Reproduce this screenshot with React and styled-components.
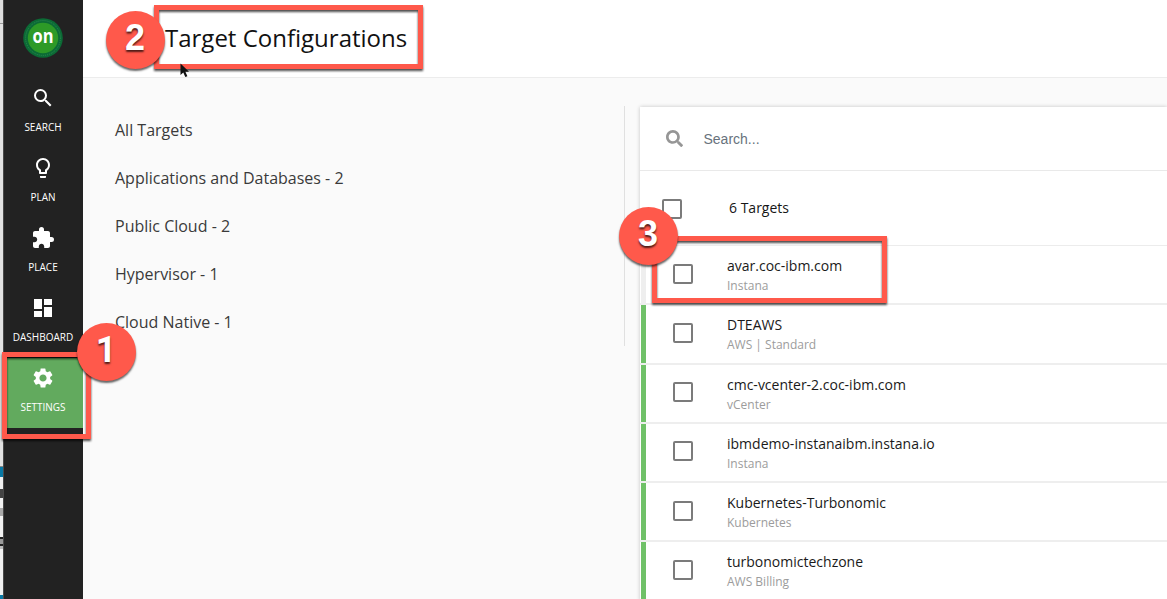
import React from "react";
import styled, { createGlobalStyle } from "styled-components";
import { MdSearch, MdLightbulbOutline, MdExtension, MdDashboard, MdSettings } from "react-icons/md";
import { FaSearch } from "react-icons/fa";

const GlobalStyle = createGlobalStyle`
  * { box-sizing: border-box; }
  body { margin: 0; overflow: hidden; background: #fafafa; font-family: "Open Sans", sans-serif; }
`;

const Page = styled.div`
  position: relative;
  display: flex;
  width: 1167px;
  height: 599px;
  overflow: hidden;
  background: #fafafa;
`;

const Edge = styled.div`
  display: flex;
  flex-direction: column;
  flex: none;
  width: 3px;
  overflow: hidden;
`;
const EdgeBand = styled.div`
  flex: none;
  height: ${(p) => p.$h}px;
  background: ${(p) => p.$c};
`;

const Sidebar = styled.nav`
  flex: none;
  display: flex;
  flex-direction: column;
  align-items: stretch;
  width: 80px;
  background: #222;
  box-shadow: inset 1px 0 0 #4a4a4a;
  color: #fff;
`;
const LogoBox = styled.div`
  display: flex;
  justify-content: center;
  padding-top: 18px;
  height: 78px;
`;
const NavItem = styled.div`
  display: flex;
  flex-direction: column;
  align-items: center;
  height: 70px;
  padding-top: 8px;
  background: ${(p) => (p.$active ? "#62aa5e" : "transparent")};
  svg { width: 24px; height: 24px; display: block; }
`;
const NavLabel = styled.span`
  margin-top: 10px;
  font-size: 10px;
  line-height: 14px;
  white-space: nowrap;
`;

const Main = styled.main`
  flex: 1;
  min-width: 0;
  display: flex;
  flex-direction: column;
`;
const Header = styled.header`
  flex: none;
  height: 78px;
  padding: 21px 0 0 82px;
  background: #fff;
  border-bottom: 1px solid #ececec;
`;
const Title = styled.h1`
  margin: 0;
  font-size: 24px;
  font-weight: 400;
  line-height: 33px;
  color: #111;
  white-space: nowrap;
`;
const Body = styled.div`
  flex: 1;
  display: flex;
`;
const Categories = styled.ul`
  list-style: none;
  flex: none;
  width: 542px;
  height: 240px;
  margin: 28px 0 0;
  padding: 0 0 0 32px;
  border-right: 1px solid #e0e0e0;
`;
const Category = styled.li`
  height: 48px;
  line-height: 48px;
  font-size: 16px;
  color: #3a3a3a;
  white-space: nowrap;
`;
const Panel = styled.section`
  flex: 1;
  margin: 29px 0 0 15px;
  background: #fff;
  box-shadow: 0 0 4px rgba(0, 0, 0, 0.22);
`;
const SearchBar = styled.div`
  display: flex;
  align-items: center;
  height: 64px;
  padding-left: 26px;
  border-bottom: 1px solid #e9e9e9;
  color: #969696;
`;
const SearchHint = styled.span`
  margin-left: 20.5px;
  font-family: "Liberation Sans", sans-serif;
  font-size: 14px;
  color: #68727c;
`;
const ListHeader = styled.div`
  display: flex;
  align-items: flex-start;
  height: 75px;
  padding: 28px 0 0 22px;
  border-bottom: 1px solid #ececec;
`;
const Count = styled.span`
  margin: -1px 0 0 47px;
  font-size: 14px;
  line-height: 19px;
  color: #161616;
`;
const Checkbox = styled.span`
  flex: none;
  width: 20px;
  height: 20px;
  border: 2px solid #7b7b7b;
  border-radius: 2px;
  background: #fff;
`;
const Row = styled.div`
  display: flex;
  align-items: flex-start;
  height: ${(p) => p.$h}px;
  margin-left: 1px;
  padding: ${(p) => p.$boxTop}px 0 0 27px;
  border-left: 5px solid ${(p) => (p.$ok ? "#70c168" : "#eeeeee")};
`;
const Divider = styled.div`
  height: 2px;
  background: #eee;
`;
const RowText = styled.div`
  display: flex;
  flex-direction: column;
  margin: ${(p) => p.$shift}px 0 0 34px;
  white-space: nowrap;
`;
const Name = styled.span`
  font-size: 14px;
  line-height: 20px;
  color: #1a1a1a;
`;
const Kind = styled.span`
  font-size: 12px;
  line-height: 19px;
  color: #9c9c9c;
`;

const Frame = styled.div`
  position: absolute;
  left: ${(p) => p.$x}px;
  top: ${(p) => p.$y}px;
  width: ${(p) => p.$w}px;
  height: ${(p) => p.$h}px;
  border: 5px solid #ff594b;
  filter: drop-shadow(0 2px 1px rgba(0, 0, 0, 0.7));
`;
const Badge = styled.div`
  position: absolute;
  left: ${(p) => p.$x}px;
  top: ${(p) => p.$y}px;
  display: flex;
  align-items: center;
  justify-content: center;
  width: 59px;
  height: 58px;
  padding: 0 1px 5px 0;
  border-radius: 50%;
  background: #ff594b;
  color: #fff;
  font-family: ${(p) => (p.$plain ? "Roboto" : '"Liberation Sans"')}, sans-serif;
  font-weight: 700;
  font-size: 36px;
  line-height: 42px;
  text-shadow: 0 2px 2px rgba(0, 0, 0, 0.7);
  box-shadow: 0 2px 2px rgba(0, 0, 0, 0.6);
`;
const Pointer = styled.svg`
  position: absolute;
  left: 179px;
  top: 62px;
`;

const nav = [
  ["SEARCH", MdSearch],
  ["PLAN", MdLightbulbOutline],
  ["PLACE", MdExtension],
  ["DASHBOARD", MdDashboard],
  ["SETTINGS", MdSettings, true],
];
const categories = ["All Targets", "Applications and Databases - 2", "Public Cloud - 2", "Hypervisor - 1", "Cloud Native - 1"];
const targets = [
  { name: "avar.coc-ibm.com", kind: "Instana", ok: false, h: 57, boxTop: 18, shift: -8 },
  { name: "DTEAWS", kind: "AWS | Standard", ok: true, h: 58, boxTop: 18, shift: -8 },
  { name: "cmc-vcenter-2.coc-ibm.com", kind: "vCenter", ok: true, h: 57, boxTop: 17, shift: -7 },
  { name: "ibmdemo-instanaibm.instana.io", kind: "Instana", ok: true, h: 57, boxTop: 17, shift: -7 },
  { name: "Kubernetes-Turbonomic", kind: "Kubernetes", ok: true, h: 57, boxTop: 18, shift: -8 },
  { name: "turbonomictechzone", kind: "AWS Billing", ok: true, h: 57, boxTop: 18, shift: -8 },
];
const edge = [
  [23, "#dedede"], [1, "#999"], [442, "#e2e2e2"], [1, "#888"], [10, "#0878a4"],
  [12, "#efefef"], [9, "#444"], [10, "#f2f2f2"], [8, "#aaa"], [21, "#f2f2f2"],
  [2, "#222"], [5, "#999"], [2, "#222"], [3, "#bbb"], [46, "#f0f0f0"], [4, "#0878a4"],
];

export default function App() {
  return (
    <>
      <GlobalStyle />
      <Page>
        <Edge>{edge.map(([h, c], i) => <EdgeBand key={i} $h={h} $c={c} />)}</Edge>
        <Sidebar>
          <LogoBox>
            <svg width="40" height="40" viewBox="0 0 40 40">
              <circle cx="20" cy="20" r="19.8" fill="#0b6b35" />
              <circle cx="20" cy="20" r="17.4" fill="none" stroke="#2f8552" strokeWidth="1" strokeDasharray="1 1" />
              <circle cx="20" cy="20" r="15.2" fill="#2d9a27" />
              <text x="20" y="25.3" textAnchor="middle" fill="#fff" fontFamily="Open Sans, sans-serif" fontWeight="700" fontSize="19" textLength="21" lengthAdjust="spacingAndGlyphs">on</text>
            </svg>
          </LogoBox>
          {nav.map(([label, Icon, active]) => (
            <NavItem key={label} $active={active}>
              <Icon />
              <NavLabel>{label}</NavLabel>
            </NavItem>
          ))}
        </Sidebar>
        <Main>
          <Header><Title>Target Configurations</Title></Header>
          <Body>
            <Categories>{categories.map((c) => <Category key={c}>{c}</Category>)}</Categories>
            <Panel>
              <SearchBar>
                <FaSearch size={17} />
                <SearchHint>Search...</SearchHint>
              </SearchBar>
              <ListHeader><Checkbox /><Count>6 Targets</Count></ListHeader>
              {targets.map((t) => (
                <React.Fragment key={t.name}>
                  <Row $ok={t.ok} $h={t.h} $boxTop={t.boxTop}>
                    <Checkbox />
                    <RowText $shift={t.shift}><Name>{t.name}</Name><Kind>{t.kind}</Kind></RowText>
                  </Row>
                  <Divider />
                </React.Fragment>
              ))}
            </Panel>
          </Body>
        </Main>
        <Frame $x={2} $y={352} $w={89} $h={87} />
        <Frame $x={154} $y={5} $w={269} $h={64} />
        <Frame $x={652} $y={236} $w={235} $h={67} />
        <Badge $x={77} $y={323} $plain>1</Badge>
        <Badge $x={106} $y={11}>2</Badge>
        <Badge $x={619} $y={207}>3</Badge>
        <Pointer width="12" height="17" viewBox="0 0 12 17">
          <path d="M1.5 1.5v11.5l2.8-2.5 2 4.6 2.1-.9-2-4.5H10z" fill="#111" />
        </Pointer>
      </Page>
    </>
  );
}
